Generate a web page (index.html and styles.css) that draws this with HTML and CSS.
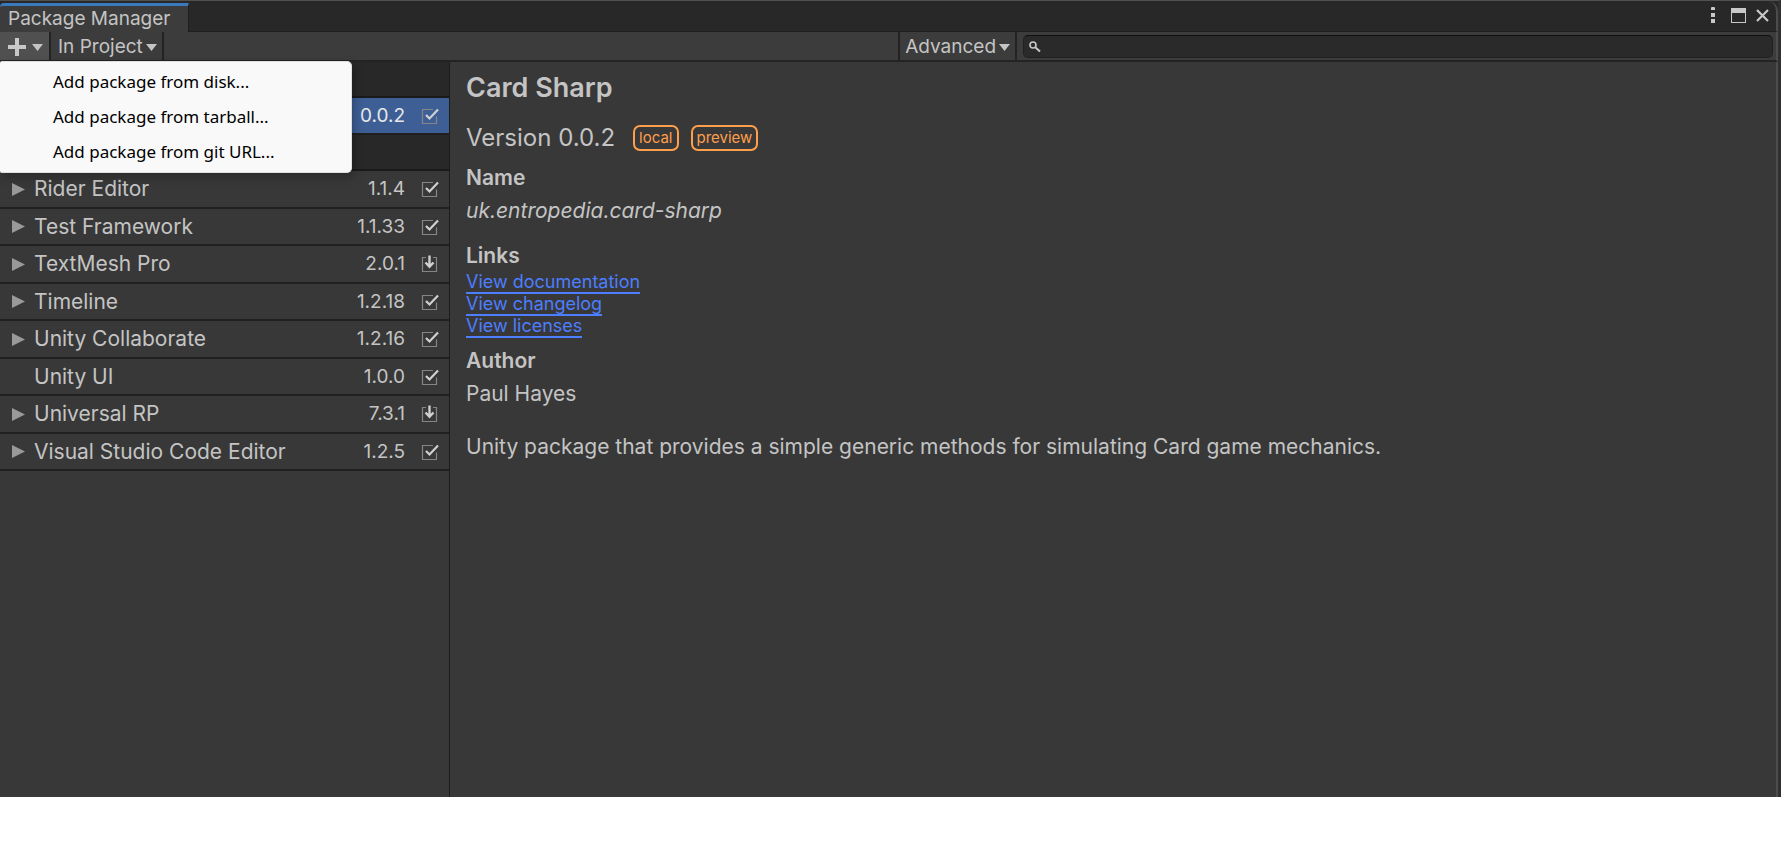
FILE: index.html
```html
<!DOCTYPE html>
<html lang="en">
<head>
<meta charset="utf-8">
<title>Package Manager</title>
<link rel="stylesheet" href="styles.css">
</head>
<body>
<svg class="defs" aria-hidden="true">
  <symbol id="check" viewBox="0 0 18 18"><path d="M12 2.500H1.500v14h14V9.500" fill="none" stroke="#858585" stroke-width="1.200"/><path d="M5 8l3.500 3.500L17 2.500" fill="none" stroke="#d0d0d0" stroke-width="2.200"/></symbol>
  <symbol id="download" viewBox="0 0 18 18"><path d="M5 2.500H1.500v14h14v-14H12" fill="none" stroke="#858585" stroke-width="1.200"/><path d="M8.500 0.500v11M4.500 7.500l4 4.200l4-4.200" fill="none" stroke="#d0d0d0" stroke-width="2.400"/></symbol>
  <symbol id="fold" viewBox="0 0 13 13"><path d="M0 0l13 6.500L0 13z" fill="#999"/></symbol>
  <symbol id="caret" viewBox="0 0 11 7"><path d="M0 0h11L5.500 7z" fill="#c4c4c4"/></symbol>
</svg>
<main class="window">
  <header class="titlebar">
    <h1 class="tab">Package Manager</h1>
    <div class="window-buttons">
      <button class="icon-button" aria-label="Options"><svg width="4" height="16" viewBox="0 0 4 16"><path d="M0 1q0-1 1-1h2q1 0 1 1v2H0zM0 6h4v4H0zM0 12h4v4H0z" fill="#c8c8c8"/></svg></button>
      <button class="icon-button" aria-label="Maximize"><svg width="15" height="15" viewBox="0 0 15 15"><path d="M0 0h15v15H0zM1 5v9h13V5z" fill="#c8c8c8" fill-rule="evenodd"/></svg></button>
      <button class="icon-button" aria-label="Close"><svg width="13" height="13" viewBox="0 0 13 13"><path d="M1 1l11 11M12 1L1 12" stroke="#c8c8c8" stroke-width="2.200"/></svg></button>
    </div>
  </header>
  <div class="toolbar">
    <button class="tool add" aria-label="Add package" aria-expanded="true"><svg width="18" height="18" viewBox="0 0 18 18"><path d="M9 0v18M0 9h18" stroke="#c8c8c8" stroke-width="4"/></svg><svg width="11" height="7"><use href="#caret"/></svg></button>
    <button class="tool filter">In Project<svg width="11" height="7"><use href="#caret"/></svg></button>
    <button class="tool advanced">Advanced<svg width="11" height="7"><use href="#caret"/></svg></button>
    <label class="search">
      <svg width="12" height="12" viewBox="0 0 12 12"><circle cx="4" cy="4" r="3" fill="none" stroke="#c8c8c8" stroke-width="1.600"/><path d="M6.500 6.500L11 10.500" stroke="#c8c8c8" stroke-width="2"/></svg>
      <input type="text" aria-label="Search packages">
    </label>
    <div class="menu" role="menu">
      <button class="menu-item" role="menuitem">Add package from disk...</button>
      <button class="menu-item" role="menuitem">Add package from tarball...</button>
      <button class="menu-item" role="menuitem">Add package from git URL...</button>
    </div>
  </div>
  <div class="content">
    <nav class="sidebar">
      <div class="group"></div>
      <div class="row selected"><span class="fold"></span><span class="name"></span><span class="version">0.0.2</span><svg class="state"><use href="#check"/></svg></div>
      <div class="group"></div>
      <ul class="packages">
        <li class="row"><svg class="fold"><use href="#fold"/></svg><span class="name">Rider Editor</span><span class="version">1.1.4</span><svg class="state"><use href="#check"/></svg></li>
        <li class="row"><svg class="fold"><use href="#fold"/></svg><span class="name">Test Framework</span><span class="version">1.1.33</span><svg class="state"><use href="#check"/></svg></li>
        <li class="row"><svg class="fold"><use href="#fold"/></svg><span class="name">TextMesh Pro</span><span class="version">2.0.1</span><svg class="state"><use href="#download"/></svg></li>
        <li class="row"><svg class="fold"><use href="#fold"/></svg><span class="name">Timeline</span><span class="version">1.2.18</span><svg class="state"><use href="#check"/></svg></li>
        <li class="row"><svg class="fold"><use href="#fold"/></svg><span class="name">Unity Collaborate</span><span class="version">1.2.16</span><svg class="state"><use href="#check"/></svg></li>
        <li class="row"><span class="fold"></span><span class="name">Unity UI</span><span class="version">1.0.0</span><svg class="state"><use href="#check"/></svg></li>
        <li class="row"><svg class="fold"><use href="#fold"/></svg><span class="name">Universal RP</span><span class="version">7.3.1</span><svg class="state"><use href="#download"/></svg></li>
        <li class="row"><svg class="fold"><use href="#fold"/></svg><span class="name">Visual Studio Code Editor</span><span class="version">1.2.5</span><svg class="state"><use href="#check"/></svg></li>
      </ul>
    </nav>
    <article class="details">
      <h2 class="title">Card Sharp</h2>
      <div class="release"><span class="release-text">Version 0.0.2</span><span class="tag">local</span><span class="tag">preview</span></div>
      <h3 class="heading">Name</h3>
      <p class="text id">uk.entropedia.card-sharp</p>
      <h3 class="heading">Links</h3>
      <div class="links">
        <a class="link" href="#documentation">View documentation</a>
        <a class="link" href="#changelog">View changelog</a>
        <a class="link" href="#licenses">View licenses</a>
      </div>
      <h3 class="heading">Author</h3>
      <p class="text author">Paul Hayes</p>
      <p class="text">Unity package that provides a simple generic methods for simulating Card game mechanics.</p>
    </article>
  </div>
</main>
</body>
</html>
```
FILE: styles.css
```css
* { box-sizing: border-box; }
body {
  margin: 0;
  min-height: 100vh;
  padding-bottom: 67px;
  display: flex;
  flex-direction: column;
  background: #fff;
  color: #c4c4c4;
  font-family: Inter, sans-serif;
}
h1, h2, h3, p, ul { margin: 0; padding: 0; }
button { border: 0; padding: 0; background: none; color: inherit; font-family: inherit; }
svg { display: block; flex: none; }
.defs { position: absolute; width: 0; height: 0; }

.window {
  flex: 1;
  display: flex;
  flex-direction: column;
  background: #282828;
  border-top: 1px solid #505050;
  border-right: 3px solid #303030;
}
.titlebar {
  display: flex;
  justify-content: space-between;
  height: 31px;
  padding-top: 2px;
  border-bottom: 1px solid #202020;
  border-right: 2px solid #4c4c4c;
  border-top-right-radius: 10px;
}
.tab {
  width: 189px;
  height: 29px;
  padding-left: 8px;
  border-top: 3px solid #3a79bb;
  border-top-left-radius: 4px;
  border-right: 1px solid #1f1f1f;
  background: #3c3c3c;
  font-size: 19px;
  line-height: 26px;
  font-weight: 400;
}
.window-buttons { display: flex; align-items: center; gap: 16px; padding: 0 7px 4px 0; }
.icon-button + .icon-button + .icon-button { margin-left: -6px; }

.toolbar {
  position: relative;
  display: flex;
  align-items: stretch;
  height: 30px;
  padding-right: 3px;
  background: #3c3c3c;
  border-bottom: 2px solid #232323;
  border-right: 2px solid #4c4c4c;
}
.tool {
  display: flex;
  align-items: center;
  gap: 3px;
  padding-top: 2px;
  border-right: 2px solid #232323;
  font-size: 19px;
  line-height: 26px;
}
.add { width: 51px; padding-left: 8px; gap: 6px; background: #505050; }
.filter { padding-left: 7px; padding-right: 5px; }
.advanced { margin-left: auto; padding-left: 5px; padding-right: 5px; border-left: 2px solid #232323; }
.search {
  flex: 0 0 42.300%;
  display: flex;
  align-items: center;
  gap: 8px;
  margin: 3px 0 2px 6px;
  padding-left: 5px;
  background: #2a2a2a;
  border: 1px solid #202020;
  border-top-color: #101010;
  border-radius: 5px;
}
.search input { flex: 1; min-width: 0; border: 0; padding: 0; outline: 0; background: none; color: inherit; font-size: 18px; }

.menu {
  position: absolute;
  z-index: 2;
  top: 29px;
  left: 0;
  width: 352px;
  padding: 2px 0 3px;
  background: #f9f9f9;
  border: 1px solid #e0e0e0;
  border-left: 0;
  border-radius: 2px 5px 5px 2px;
  box-shadow: 3px 4px 10px rgba(0, 0, 0, 0.25);
  color: #000;
  font-family: "Noto Sans", sans-serif;
}
.menu-item { display: block; width: 100%; height: 35px; padding-left: 53px; text-align: left; font-size: 17px; line-height: 35px; }

.content { flex: 1; display: flex; background: #383838; border-right: 2px solid #4c4c4c; }
.sidebar { flex: none; width: 450px; border-right: 1px solid #1c1c1c; }
.group { height: 36px; background: #282828; border-bottom: 2px solid #1a1a1a; }
.row {
  display: flex;
  align-items: center;
  height: 37px;
  padding: 0 10px 0 12px;
  border-bottom: 2px solid #202020;
  list-style: none;
}
.packages .row:nth-child(odd) { height: 38px; }
.selected { height: 37px; background: #3e5f96; color: #e8e8e8; }
.fold { flex: none; width: 13px; height: 13px; }
.name { flex: 1; padding-left: 9px; font-size: 21px; line-height: 28px; }
.version { padding-right: 16px; font-size: 19px; line-height: 28px; }
.state { width: 18px; height: 18px; }

.details { flex: 1; padding: 9px 16px; }
.title { font-size: 27px; line-height: 34px; font-weight: 600; }
.release { display: flex; align-items: center; gap: 12px; margin-top: 16px; }
.release-text { padding-right: 6px; font-size: 24px; line-height: 34px; }
.tag {
  padding: 0 4px;
  border: 2px solid #ff9f4b;
  border-radius: 7px;
  color: #ff9f4b;
  font-size: 15px;
  line-height: 22px;
}
.heading { margin-top: 9px; font-size: 21px; line-height: 28px; font-weight: 600; }
.text { font-size: 21px; line-height: 28px; }
.id { margin: 5px 0 17px; font-style: italic; }
.links { display: flex; flex-direction: column; align-items: flex-start; margin: 1px 0 9px; }
.link { border-bottom: 2px solid #4c7eff; color: #4c7eff; font-size: 18px; line-height: 21px; text-decoration: none; }
.link + .link { line-height: 20px; }
.author { margin: 5px 0 25px; }
```
